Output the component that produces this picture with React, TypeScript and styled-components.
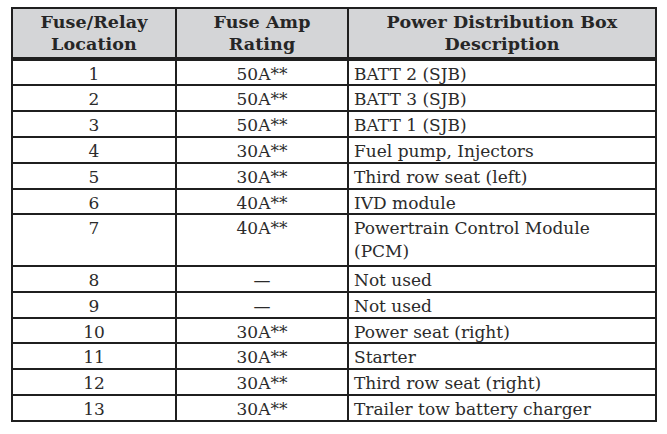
import * as React from "react";
import styled, { createGlobalStyle } from "styled-components";

type Row = { loc: string; amp: string; desc: React.ReactNode; tall?: boolean };

const rows: Row[] = [
  { loc: "1", amp: "50A**", desc: "BATT 2 (SJB)" },
  { loc: "2", amp: "50A**", desc: "BATT 3 (SJB)" },
  { loc: "3", amp: "50A**", desc: "BATT 1 (SJB)" },
  { loc: "4", amp: "30A**", desc: "Fuel pump, Injectors" },
  { loc: "5", amp: "30A**", desc: "Third row seat (left)" },
  { loc: "6", amp: "40A**", desc: "IVD module" },
  {
    loc: "7",
    amp: "40A**",
    desc: (
      <>
        Powertrain Control Module
        <br />
        (PCM)
      </>
    ),
    tall: true,
  },
  { loc: "8", amp: "—", desc: "Not used" },
  { loc: "9", amp: "—", desc: "Not used" },
  { loc: "10", amp: "30A**", desc: "Power seat (right)" },
  { loc: "11", amp: "30A**", desc: "Starter" },
  { loc: "12", amp: "30A**", desc: "Third row seat (right)" },
  { loc: "13", amp: "30A**", desc: "Trailer tow battery charger" },
];

function App() {
  return (
    <>
      <GlobalStyle />
      <Page>
        <Table>
          <HeadCell>
            Fuse/Relay
            <br />
            Location
          </HeadCell>
          <HeadCell>
            Fuse Amp
            <br />
            Rating
          </HeadCell>
          <HeadCell>
            Power Distribution Box
            <br />
            Description
          </HeadCell>
          {rows.map(r => (
            <React.Fragment key={r.loc}>
              <Cell $tall={r.tall} $align="center">
                {r.loc}
              </Cell>
              <Cell $tall={r.tall} $align="center">
                {r.amp}
              </Cell>
              <Cell $tall={r.tall} $align="left">
                {r.desc}
              </Cell>
            </React.Fragment>
          ))}
        </Table>
      </Page>
    </>
  );
}

const GlobalStyle = createGlobalStyle`
  html, body {
    margin: 0;
    padding: 0;
    background: #ffffff;
  }
`;

const Page = styled.div`
  width: 667px;
  height: 434px;
  padding: 7px 0 0 11px;
  box-sizing: border-box;
  font-family: "DejaVu Serif", "Liberation Serif", serif;
  color: #2b2b2b;
`;

const Table = styled.div`
  display: grid;
  width: 646px;
  box-sizing: border-box;
  grid-template-columns: 162px 170px 306px;
  grid-auto-rows: 23.8px;
  gap: 2px;
  padding: 2px;
  background: #1f1f1f;
`;

const HeadCell = styled.div`
  grid-row-end: span 2;
  height: 48px;
  background: #d4d5d7;
  font-weight: bold;
  font-size: 17.5px;
  line-height: 22px;
  letter-spacing: 0.1px;
  text-align: center;
  display: flex;
  align-items: center;
  justify-content: center;
  color: #262626;
`;

const Cell = styled.div<{ $tall?: boolean; $align: "left" | "center" }>`
  background: #ffffff;
  grid-row-end: ${p => (p.$tall ? "span 2" : "span 1")};
  font-size: 17px;
  line-height: 23px;
  padding: 2px 0 0 ${p => (p.$align === "left" ? "5px" : "0")};
  text-align: ${p => p.$align};
  white-space: nowrap;
  box-sizing: border-box;
  overflow: hidden;
`;

export default App;
